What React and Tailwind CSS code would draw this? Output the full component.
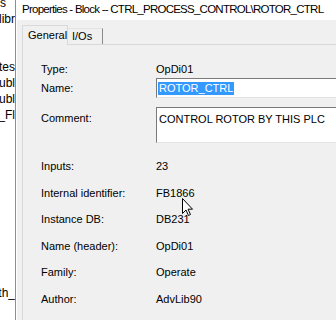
export default function App() {
  const rows = [
    { label: "Inputs:", value: "23", mt: "mt-[16px]" },
    { label: "Internal identifier:", value: "FB1866", mt: "mt-[13px]" },
    { label: "Instance DB:", value: "DB231", mt: "mt-[12px]" },
    { label: "Name (header):", value: "OpDi01", mt: "mt-[13px]" },
    { label: "Family:", value: "Operate", mt: "mt-[12px]" },
    { label: "Author:", value: "AdvLib90", mt: "mt-[13px]" },
  ];

  return (
    <div className="relative flex w-[336px] h-[320px] overflow-hidden bg-white font-['Liberation_Sans',Arial,sans-serif] text-[11px] text-black">
      {/* tree behind the dialog, cut off */}
      <div className="w-[15px] shrink-0 overflow-hidden bg-white text-[12px] leading-[16px]">
        <div className="-mt-[5px]">
          <div className="h-[16px] whitespace-nowrap">s</div>
          {["libr", "", "", "ates", "ubl", "ubl", "o_Fl"].map((t, i) => (
            <div key={i} className="flex justify-end h-[16px] whitespace-nowrap">
              {t}
            </div>
          ))}
          <div className="flex justify-end h-[16px] mt-[162px] whitespace-nowrap">ith_</div>
        </div>
      </div>

      {/* dialog */}
      <div className="flex flex-col flex-1 border-l border-[#5b9bd5]">
        <div className="h-[20px] shrink-0 bg-white pl-[6px] flex items-center text-[11.5px] tracking-[-0.75px] whitespace-nowrap">
          Properties - Block -- CTRL_PROCESS_CONTROL\ROTOR_CTRL
        </div>

        <div className="flex-1 bg-[#f0f0f0] pl-[5px] border-l border-white flex flex-col">
          {/* tabs */}
          <div className="flex items-end h-[24px] shrink-0">
            <div className="h-[20px] w-[46px] pl-[5px] flex items-center bg-[#f0f0f0] border border-b-0 border-[#d9d9d9] relative top-[1px]">
              General
            </div>
            <div className="h-[16px] w-[35px] pl-[4px] flex items-center border-t border-r border-t-[#e3e3e3] border-r-[#8a8a8a]">
              I/Os
            </div>
          </div>

          {/* panel */}
          <div className="flex-1 border-t border-l border-[#d9d9d9] pl-[18px] flex flex-col">
            <div className="flex h-[14px] items-center mt-[17px]">
              <div className="w-[115px]">Type:</div>
              <div>OpDi01</div>
            </div>

            <div className="flex h-[20px] items-center mt-[2px]">
              <div className="w-[115px]">Name:</div>
              <div className="flex-1 h-[20px] bg-white border border-[#7a7a7a] border-r-0 border-b-[#e3e3e3] pl-[1px] flex items-center">
                <span className="bg-[#3399ff] text-white px-[1px] leading-[13px]">ROTOR_CTRL</span>
              </div>
            </div>

            <div className="flex h-[36px] mt-[9px]">
              <div className="w-[115px] pt-[3px]">Comment:</div>
              <div className="flex-1 h-[36px] bg-white border border-[#7a7a7a] border-r-0 border-b-[#e3e3e3] pl-[2px] pt-[3px]">
                CONTROL ROTOR BY THIS PLC
              </div>
            </div>

            {rows.map((r) => (
              <div key={r.label} className={`flex h-[14px] items-center ${r.mt}`}>
                <div className="w-[115px]">{r.label}</div>
                <div>{r.value}</div>
              </div>
            ))}
          </div>
        </div>
      </div>

      {/* mouse pointer */}
      <svg className="absolute left-[182px] top-[198px]" width="12" height="19" viewBox="0 0 12 19">
        <path d="M0.5 0.5 L0.5 15.5 L4 12 L6.5 17.5 L8.5 16.5 L6 11.2 L10.5 11.2 Z" fill="white" stroke="black" strokeWidth="1" />
      </svg>
    </div>
  );
}
